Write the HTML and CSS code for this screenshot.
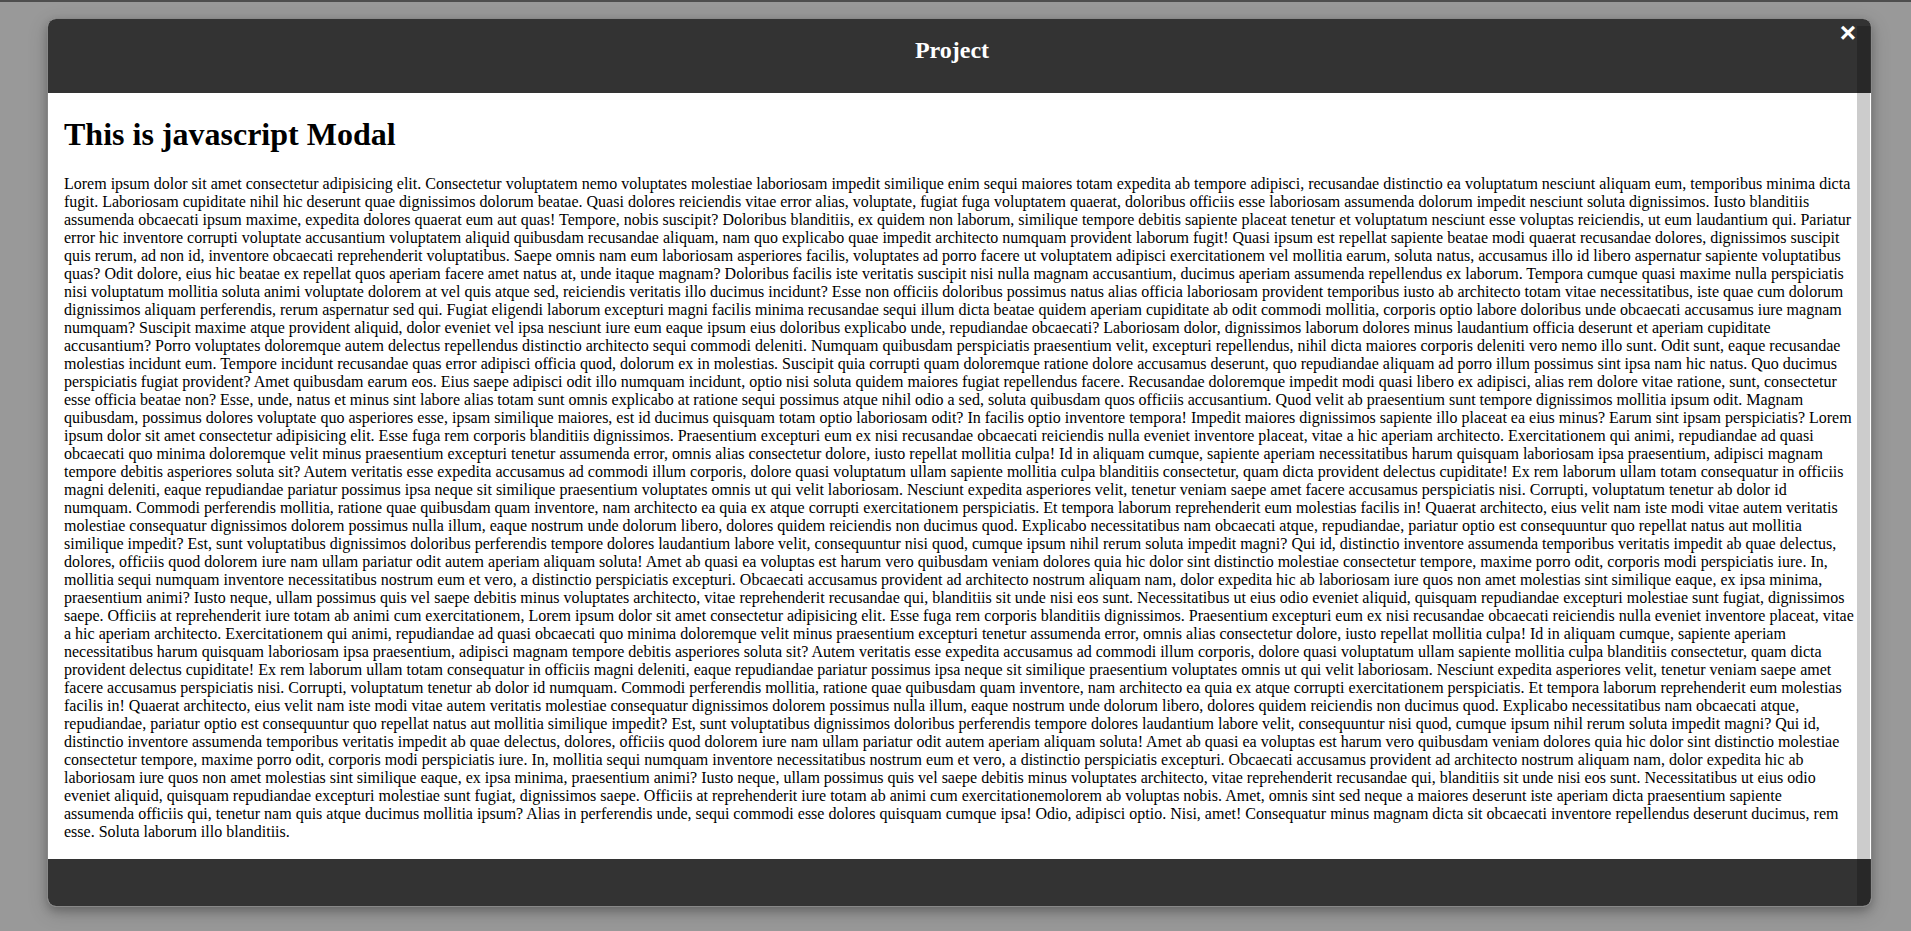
FILE: index.html
```html
<!DOCTYPE html>
<html lang="en">
<head>
<meta charset="utf-8">
<title>Modal</title>
<link rel="stylesheet" href="styles.css">
</head>
<body>
<div class="overlay">
  <div class="modal">
    <span class="close">&times;</span>
    <div class="modal-header">
      <h2 class="modal-title">Project</h2>
    </div>
    <div class="modal-body">
      <h1 class="body-title">This is javascript Modal</h1>
      <p class="body-text">Lorem ipsum dolor sit amet consectetur adipisicing elit. Consectetur voluptatem nemo voluptates molestiae laboriosam impedit similique enim sequi maiores totam expedita ab tempore adipisci, recusandae distinctio ea voluptatum nesciunt aliquam eum, temporibus minima dicta fugit. Laboriosam cupiditate nihil hic deserunt quae dignissimos dolorum beatae. Quasi dolores reiciendis vitae error alias, voluptate, fugiat fuga voluptatem quaerat, doloribus officiis esse laboriosam assumenda dolorum impedit nesciunt soluta dignissimos. Iusto blanditiis assumenda obcaecati ipsum maxime, expedita dolores quaerat eum aut quas! Tempore, nobis suscipit? Doloribus blanditiis, ex quidem non laborum, similique tempore debitis sapiente placeat tenetur et voluptatum nesciunt esse voluptas reiciendis, ut eum laudantium qui. Pariatur error hic inventore corrupti voluptate accusantium voluptatem aliquid quibusdam recusandae aliquam, nam quo explicabo quae impedit architecto numquam provident laborum fugit! Quasi ipsum est repellat sapiente beatae modi quaerat recusandae dolores, dignissimos suscipit quis rerum, ad non id, inventore obcaecati reprehenderit voluptatibus. Saepe omnis nam eum laboriosam asperiores facilis, voluptates ad porro facere ut voluptatem adipisci exercitationem vel mollitia earum, soluta natus, accusamus illo id libero aspernatur sapiente voluptatibus quas? Odit dolore, eius hic beatae ex repellat quos aperiam facere amet natus at, unde itaque magnam? Doloribus facilis iste veritatis suscipit nisi nulla magnam accusantium, ducimus aperiam assumenda repellendus ex laborum. Tempora cumque quasi maxime nulla perspiciatis nisi voluptatum mollitia soluta animi voluptate dolorem at vel quis atque sed, reiciendis veritatis illo ducimus incidunt? Esse non officiis doloribus possimus natus alias officia laboriosam provident temporibus iusto ab architecto totam vitae necessitatibus, iste quae cum dolorum dignissimos aliquam perferendis, rerum aspernatur sed qui. Fugiat eligendi laborum excepturi magni facilis minima recusandae sequi illum dicta beatae quidem aperiam cupiditate ab odit commodi mollitia, corporis optio labore doloribus unde obcaecati accusamus iure magnam numquam? Suscipit maxime atque provident aliquid, dolor eveniet vel ipsa nesciunt iure eum eaque ipsum eius doloribus explicabo unde, repudiandae obcaecati? Laboriosam dolor, dignissimos laborum dolores minus laudantium officia deserunt et aperiam cupiditate accusantium? Porro voluptates doloremque autem delectus repellendus distinctio architecto sequi commodi deleniti. Numquam quibusdam perspiciatis praesentium velit, excepturi repellendus, nihil dicta maiores corporis deleniti vero nemo illo sunt. Odit sunt, eaque recusandae molestias incidunt eum. Tempore incidunt recusandae quas error adipisci officia quod, dolorum ex in molestias. Suscipit quia corrupti quam doloremque ratione dolore accusamus deserunt, quo repudiandae aliquam ad porro illum possimus sint ipsa nam hic natus. Quo ducimus perspiciatis fugiat provident? Amet quibusdam earum eos. Eius saepe adipisci odit illo numquam incidunt, optio nisi soluta quidem maiores fugiat repellendus facere. Recusandae doloremque impedit modi quasi libero ex adipisci, alias rem dolore vitae ratione, sunt, consectetur esse officia beatae non? Esse, unde, natus et minus sint labore alias totam sunt omnis explicabo at ratione sequi possimus atque nihil odio a sed, soluta quibusdam quos officiis accusantium. Quod velit ab praesentium sunt tempore dignissimos mollitia ipsum odit. Magnam quibusdam, possimus dolores voluptate quo asperiores esse, ipsam similique maiores, est id ducimus quisquam totam optio laboriosam odit? In facilis optio inventore tempora! Impedit maiores dignissimos sapiente illo placeat ea eius minus? Earum sint ipsam perspiciatis? Lorem ipsum dolor sit amet consectetur adipisicing elit. Esse fuga rem corporis blanditiis dignissimos. Praesentium excepturi eum ex nisi recusandae obcaecati reiciendis nulla eveniet inventore placeat, vitae a hic aperiam architecto. Exercitationem qui animi, repudiandae ad quasi obcaecati quo minima doloremque velit minus praesentium excepturi tenetur assumenda error, omnis alias consectetur dolore, iusto repellat mollitia culpa! Id in aliquam cumque, sapiente aperiam necessitatibus harum quisquam laboriosam ipsa praesentium, adipisci magnam tempore debitis asperiores soluta sit? Autem veritatis esse expedita accusamus ad commodi illum corporis, dolore quasi voluptatum ullam sapiente mollitia culpa blanditiis consectetur, quam dicta provident delectus cupiditate! Ex rem laborum ullam totam consequatur in officiis magni deleniti, eaque repudiandae pariatur possimus ipsa neque sit similique praesentium voluptates omnis ut qui velit laboriosam. Nesciunt expedita asperiores velit, tenetur veniam saepe amet facere accusamus perspiciatis nisi. Corrupti, voluptatum tenetur ab dolor id numquam. Commodi perferendis mollitia, ratione quae quibusdam quam inventore, nam architecto ea quia ex atque corrupti exercitationem perspiciatis. Et tempora laborum reprehenderit eum molestias facilis in! Quaerat architecto, eius velit nam iste modi vitae autem veritatis molestiae consequatur dignissimos dolorem possimus nulla illum, eaque nostrum unde dolorum libero, dolores quidem reiciendis non ducimus quod. Explicabo necessitatibus nam obcaecati atque, repudiandae, pariatur optio est consequuntur quo repellat natus aut mollitia similique impedit? Est, sunt voluptatibus dignissimos doloribus perferendis tempore dolores laudantium labore velit, consequuntur nisi quod, cumque ipsum nihil rerum soluta impedit magni? Qui id, distinctio inventore assumenda temporibus veritatis impedit ab quae delectus, dolores, officiis quod dolorem iure nam ullam pariatur odit autem aperiam aliquam soluta! Amet ab quasi ea voluptas est harum vero quibusdam veniam dolores quia hic dolor sint distinctio molestiae consectetur tempore, maxime porro odit, corporis modi perspiciatis iure. In, mollitia sequi numquam inventore necessitatibus nostrum eum et vero, a distinctio perspiciatis excepturi. Obcaecati accusamus provident ad architecto nostrum aliquam nam, dolor expedita hic ab laboriosam iure quos non amet molestias sint similique eaque, ex ipsa minima, praesentium animi? Iusto neque, ullam possimus quis vel saepe debitis minus voluptates architecto, vitae reprehenderit recusandae qui, blanditiis sit unde nisi eos sunt. Necessitatibus ut eius odio eveniet aliquid, quisquam repudiandae excepturi molestiae sunt fugiat, dignissimos saepe. Officiis at reprehenderit iure totam ab animi cum exercitationem, Lorem ipsum dolor sit amet consectetur adipisicing elit. Esse fuga rem corporis blanditiis dignissimos. Praesentium excepturi eum ex nisi recusandae obcaecati reiciendis nulla eveniet inventore placeat, vitae a hic aperiam architecto. Exercitationem qui animi, repudiandae ad quasi obcaecati quo minima doloremque velit minus praesentium excepturi tenetur assumenda error, omnis alias consectetur dolore, iusto repellat mollitia culpa! Id in aliquam cumque, sapiente aperiam necessitatibus harum quisquam laboriosam ipsa praesentium, adipisci magnam tempore debitis asperiores soluta sit? Autem veritatis esse expedita accusamus ad commodi illum corporis, dolore quasi voluptatum ullam sapiente mollitia culpa blanditiis consectetur, quam dicta provident delectus cupiditate! Ex rem laborum ullam totam consequatur in officiis magni deleniti, eaque repudiandae pariatur possimus ipsa neque sit similique praesentium voluptates omnis ut qui velit laboriosam. Nesciunt expedita asperiores velit, tenetur veniam saepe amet facere accusamus perspiciatis nisi. Corrupti, voluptatum tenetur ab dolor id numquam. Commodi perferendis mollitia, ratione quae quibusdam quam inventore, nam architecto ea quia ex atque corrupti exercitationem perspiciatis. Et tempora laborum reprehenderit eum molestias facilis in! Quaerat architecto, eius velit nam iste modi vitae autem veritatis molestiae consequatur dignissimos dolorem possimus nulla illum, eaque nostrum unde dolorum libero, dolores quidem reiciendis non ducimus quod. Explicabo necessitatibus nam obcaecati atque, repudiandae, pariatur optio est consequuntur quo repellat natus aut mollitia similique impedit? Est, sunt voluptatibus dignissimos doloribus perferendis tempore dolores laudantium labore velit, consequuntur nisi quod, cumque ipsum nihil rerum soluta impedit magni? Qui id, distinctio inventore assumenda temporibus veritatis impedit ab quae delectus, dolores, officiis quod dolorem iure nam ullam pariatur odit autem aperiam aliquam soluta! Amet ab quasi ea voluptas est harum vero quibusdam veniam dolores quia hic dolor sint distinctio molestiae consectetur tempore, maxime porro odit, corporis modi perspiciatis iure. In, mollitia sequi numquam inventore necessitatibus nostrum eum et vero, a distinctio perspiciatis excepturi. Obcaecati accusamus provident ad architecto nostrum aliquam nam, dolor expedita hic ab laboriosam iure quos non amet molestias sint similique eaque, ex ipsa minima, praesentium animi? Iusto neque, ullam possimus quis vel saepe debitis minus voluptates architecto, vitae reprehenderit recusandae qui, blanditiis sit unde nisi eos sunt. Necessitatibus ut eius odio eveniet aliquid, quisquam repudiandae excepturi molestiae sunt fugiat, dignissimos saepe. Officiis at reprehenderit iure totam ab animi cum exercitationemolorem ab voluptas nobis. Amet, omnis sint sed neque a maiores deserunt iste aperiam dicta praesentium sapiente assumenda officiis qui, tenetur nam quis atque ducimus mollitia ipsum? Alias in perferendis unde, sequi commodi esse dolores quisquam cumque ipsa! Odio, adipisci optio. Nisi, amet! Consequatur minus magnam dicta sit obcaecati inventore repellendus deserunt ducimus, rem esse. Soluta laborum illo blanditiis.</p>
    </div>
    <div class="modal-footer"></div>
    <div class="scrollbar"></div>
  </div>
</div>
</body>
</html>
```
FILE: styles.css
```css
html, body {
  margin: 0;
  padding: 0;
  height: 100%;
}

body {
  background: #999999;
  font-family: "Liberation Serif", "Times New Roman", serif;
  color: #000;
  overflow: hidden;
}

.overlay {
  height: 100%;
  box-sizing: border-box;
  border-top: 2px solid #4e4e4e;
  padding: 16px 0 0 47px;
}

.modal {
  position: relative;
  width: 1825px;
  height: 889px;
  box-sizing: border-box;
  border: 1px solid #888;
  border-radius: 9px;
  overflow: hidden;
  background: #fff;
  display: flex;
  flex-direction: column;
  box-shadow: 0 4px 8px 0 rgba(0, 0, 0, 0.2), 0 6px 20px 0 rgba(0, 0, 0, 0.19);
}

.modal-header {
  flex: 0 0 74px;
  box-sizing: border-box;
  background: #333333;
  color: #fff;
  padding: 17px 31px 0 16px;
}

.modal-title {
  margin: 0;
  font-size: 24px;
  line-height: 28px;
  font-weight: bold;
  text-align: center;
}

.close {
  position: absolute;
  top: 0;
  right: 15px;
  color: #fff;
  font-family: "Liberation Sans", Arial, sans-serif;
  font-size: 28px;
  line-height: 28px;
  font-weight: bold;
}

.modal-body {
  flex: 1 1 auto;
  padding: 2px 16px;
  overflow: hidden;
}

.body-title {
  font-size: 32px;
  line-height: 37px;
  font-weight: bold;
  margin: 21.44px 0;
}

.body-text {
  font-size: 16px;
  line-height: 18px;
  margin: 16px 0;
}

.modal-footer {
  flex: 0 0 47px;
  background: #333333;
}

.scrollbar {
  position: absolute;
  top: 7px;
  bottom: 1px;
  right: 1px;
  width: 13px;
  background: rgba(0, 0, 0, 0.2);
}
```
